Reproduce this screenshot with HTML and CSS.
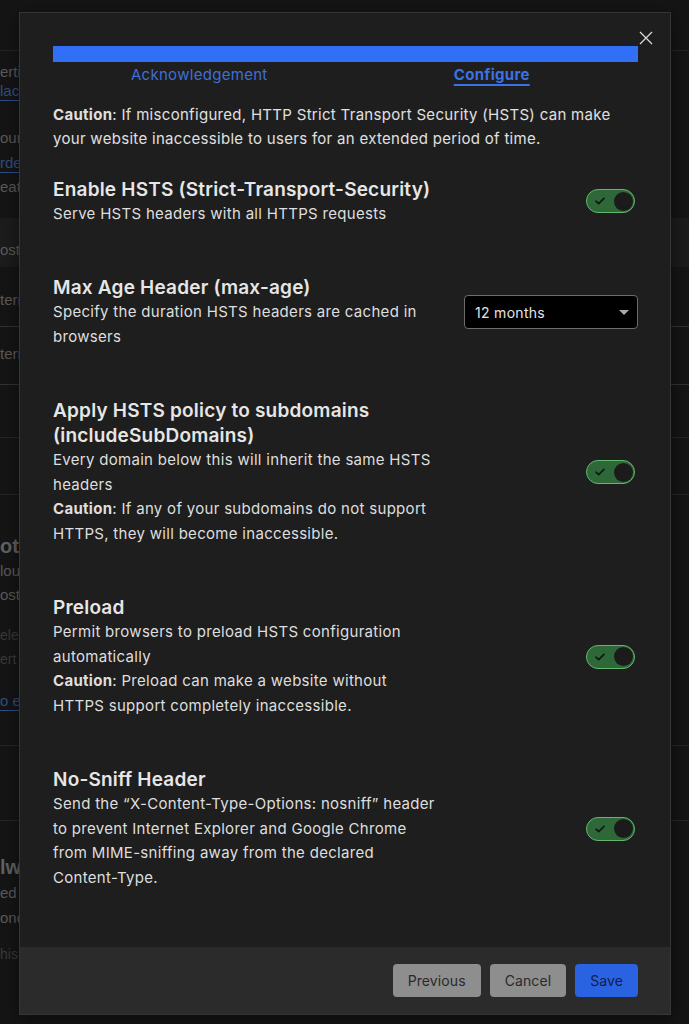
FILE: index.html
```html
<!DOCTYPE html>
<html lang="en">
<head>
<meta charset="utf-8">
<title>HSTS settings</title>
<link rel="stylesheet" href="styles.css">
</head>
<body>
<div class="page">
  <div class="pg-head"></div>
  <div class="pg-sec1">
    <p>ertificate Transparency Monitoring</p>
    <p class="pg-link">lace a new order</p>
  </div>
  <div class="pg-sec2">
    <p>our certificate will be renewed</p>
    <p class="pg-link">rder advanced certificate</p>
    <p>eatures available</p>
  </div>
  <div class="pg-band"><p>osts</p></div>
  <div class="pg-row pg-row-a"><p>termediate</p></div>
  <div class="pg-row pg-row-b"><p>termediate</p></div>
  <div class="pg-row pg-row-c"></div>
  <div class="pg-row pg-row-d"></div>
  <div class="pg-sec3">
    <p class="pg-title">otal TLS</p>
    <p>loudflare will issue</p>
    <p>osts</p>
    <p class="pg-dim pg-gap">elect a certificate</p>
    <p class="pg-dim">ert authority</p>
    <p class="pg-link pg-gap2">o enable</p>
  </div>
  <div class="pg-row pg-row-e"></div>
  <div class="pg-row pg-row-f"></div>
  <div class="pg-sec4">
    <p class="pg-title">lways Use HTTPS</p>
    <p>ed requests</p>
    <p>onding HTTPS</p>
    <p class="pg-dim pg-gap3">his setting</p>
  </div>
</div>

<div class="modal">
  <button class="close" aria-label="Close">
    <svg viewBox="0 0 14 14" width="14" height="14"><path d="M1 1 13 13M13 1 1 13"/></svg>
  </button>
  <div class="modal-body">
    <div class="progress"></div>
    <div class="steps">
      <span class="step">Acknowledgement</span>
      <span class="step step-active">Configure</span>
    </div>
    <p class="caution"><b>Caution</b>: If misconfigured, HTTP Strict Transport Security (HSTS) can make your website inaccessible to users for an extended period of time.</p>

    <div class="opt opt-first">
      <div class="opt-text">
        <h3>Enable HSTS (Strict-Transport-Security)</h3>
        <p>Serve HSTS headers with all HTTPS requests</p>
      </div>
      <span class="toggle"><svg class="chk" viewBox="0 0 10 8"><path d="M1 4.2 3.7 6.6 9 1.3"/></svg><span class="knob"></span></span>
    </div>

    <div class="opt">
      <div class="opt-text">
        <h3>Max Age Header (max-age)</h3>
        <p>Specify the duration HSTS headers are cached in browsers</p>
      </div>
      <div class="select"><span>12 months</span><svg class="caret" viewBox="0 0 10 5" width="10" height="5"><path d="M0 0H10L5 5Z"/></svg></div>
    </div>

    <div class="opt">
      <div class="opt-text">
        <h3>Apply HSTS policy to subdomains (includeSubDomains)</h3>
        <p>Every domain below this will inherit the same HSTS headers</p>
        <p><b>Caution</b>: If any of your subdomains do not support HTTPS, they will become inaccessible.</p>
      </div>
      <span class="toggle"><svg class="chk" viewBox="0 0 10 8"><path d="M1 4.2 3.7 6.6 9 1.3"/></svg><span class="knob"></span></span>
    </div>

    <div class="opt">
      <div class="opt-text">
        <h3>Preload</h3>
        <p>Permit browsers to preload HSTS configuration automatically</p>
        <p><b>Caution</b>: Preload can make a website without HTTPS support completely inaccessible.</p>
      </div>
      <span class="toggle"><svg class="chk" viewBox="0 0 10 8"><path d="M1 4.2 3.7 6.6 9 1.3"/></svg><span class="knob"></span></span>
    </div>

    <div class="opt">
      <div class="opt-text">
        <h3>No-Sniff Header</h3>
        <p>Send the “X-Content-Type-Options: nosniff” header to prevent Internet Explorer and Google Chrome from MIME-sniffing away from the declared <span class="nowrap">Content-Type.</span></p>
      </div>
      <span class="toggle"><svg class="chk" viewBox="0 0 10 8"><path d="M1 4.2 3.7 6.6 9 1.3"/></svg><span class="knob"></span></span>
    </div>
  </div>
  <div class="modal-footer">
    <button class="btn btn-grey">Previous</button>
    <button class="btn btn-grey">Cancel</button>
    <button class="btn btn-blue">Save</button>
  </div>
</div>
</body>
</html>
```
FILE: styles.css
```css
html, body {
  margin: 0;
  padding: 0;
  background: #151515;
}
body {
  width: 689px;
  height: 1024px;
  overflow: hidden;
  position: relative;
  font-family: Inter, "Liberation Sans", Arial, sans-serif;
}
p { margin: 0; }
.nowrap { white-space: nowrap; }

/* ---------- dimmed background page ---------- */
.page {
  height: 1024px;
  overflow: hidden;
  font-size: 15px;
  color: #5b5b5b;
  white-space: nowrap;
  font-family: "Liberation Sans", Arial, sans-serif;
}
.pg-head {
  height: 50px;
  border-bottom: 1px solid #242424;
}
.pg-sec1 {
  padding-top: 11px;
  line-height: 19px;
}
.pg-link {
  color: #2f4f86;
  text-decoration: underline;
  text-underline-offset: 4px;
}
.pg-sec2 {
  margin-top: 26px;
  line-height: 24.5px;
}
.pg-band {
  margin-top: 18px;
  height: 49px;
  box-sizing: border-box;
  padding-top: 21px;
  line-height: 22px;
  background: #1c1c1c;
}
.pg-row {
  box-sizing: border-box;
  border-bottom: 1px solid #262626;
  line-height: 22px;
}
.pg-row-a { height: 60px; padding-top: 22px; border-bottom-color: #333; }
.pg-row-b { height: 58px; padding-top: 16px; border-bottom-color: #333; }
.pg-row-c { height: 53px; }
.pg-row-d { height: 57px; }
.pg-sec3 {
  padding-top: 38px;
  line-height: 24px;
}
.pg-title {
  font-size: 20px;
  font-weight: bold;
  line-height: 26px;
  color: #626262;
}
.pg-dim { color: #3b3b3b; font-size: 14px; }
.pg-gap { margin-top: 16px; }
.pg-gap2 { margin-top: 18px; }
.pg-row-e { height: 33px; }
.pg-row-f { height: 75px; }
.pg-sec4 {
  padding-top: 33px;
  line-height: 25px;
}
.pg-gap3 { margin-top: 12px; }

/* ---------- modal ---------- */
.modal {
  position: absolute;
  left: 19px;
  top: 12px;
  width: 652px;
  height: 1003px;
  box-sizing: border-box;
  border: 1px solid #363636;
  background: #1e1e1e;
  display: flex;
  flex-direction: column;
  box-shadow: 0 4px 18px rgba(0, 0, 0, 0.5);
  color: #e2e2e2;
}
.close {
  position: absolute;
  top: 18px;
  right: 17px;
  width: 14px;
  height: 14px;
  padding: 0;
  border: 0;
  background: none;
  display: flex;
}
.close svg path {
  stroke: #d9d9d9;
  stroke-width: 1.3;
  fill: none;
}
.modal-body {
  flex: 1;
  padding: 33px 32px 0 33px;
  letter-spacing: 0.3px;
}
.progress {
  height: 16px;
  background: #316ff6;
}
.steps {
  display: grid;
  grid-template-columns: 1fr 1fr;
  margin-top: 2px;
  line-height: 22px;
  font-size: 15px;
  text-align: center;
}
.step { color: #3d6fd8; }
.step-active {
  justify-self: center;
  font-weight: 700;
  color: #3a72e6;
  text-decoration: underline;
  text-decoration-thickness: 2px;
  text-underline-offset: 4px;
}
.caution {
  margin-top: 17px;
  font-size: 15px;
  line-height: 24px;
  color: #e0e0e0;
}
.caution b, .opt-text b { font-weight: 700; }

.opt {
  display: flex;
  align-items: center;
  justify-content: space-between;
  margin-top: 49px;
}
.opt-first { margin-top: 25.5px; }
.opt-text { width: 385px; }
.opt-text h3 {
  margin: 0;
  font-size: 19px;
  line-height: 25px;
  font-weight: 600;
  letter-spacing: 0.2px;
  color: #e6e6e6;
}
.opt-text p {
  font-size: 15px;
  line-height: 24.5px;
  color: #dedede;
}

.toggle {
  width: 49px;
  height: 24px;
  box-sizing: border-box;
  margin-right: 3px;
  border: 1.5px solid #63b66e;
  border-radius: 12px;
  background: #2e6838;
  display: flex;
  align-items: center;
  justify-content: space-between;
  padding: 0 1.5px 0 8px;
}
.chk {
  width: 10px;
  height: 8px;
}
.chk path {
  fill: none;
  stroke: #0e1a10;
  stroke-width: 1.7;
  stroke-linecap: round;
  stroke-linejoin: round;
}
.knob {
  width: 19px;
  height: 19px;
  border-radius: 50%;
  background: #1b1b1b;
}

.select {
  width: 174px;
  height: 34px;
  box-sizing: border-box;
  border: 1px solid #6c6c6c;
  border-radius: 4px;
  background: #000;
  display: flex;
  align-items: center;
  justify-content: space-between;
  padding: 0 8px 0 10px;
  font-size: 14px;
  color: #e4e4e4;
}
.caret path { fill: #a9a9a9; }

.modal-footer {
  height: 67px;
  flex: none;
  background: #2b2b2b;
  display: flex;
  justify-content: flex-end;
  align-items: center;
  gap: 9px;
  padding-right: 32px;
}
.btn {
  height: 33px;
  border: 0;
  border-radius: 4px;
  padding: 0 15px;
  font-family: Inter, "Liberation Sans", Arial, sans-serif;
  font-size: 14px;
  letter-spacing: 0.1px;
}
.btn-grey {
  background: #8e8e8e;
  color: #2a2a2a;
}
.btn-blue {
  background: #2a63e2;
  color: #0f1e4c;
}
```
